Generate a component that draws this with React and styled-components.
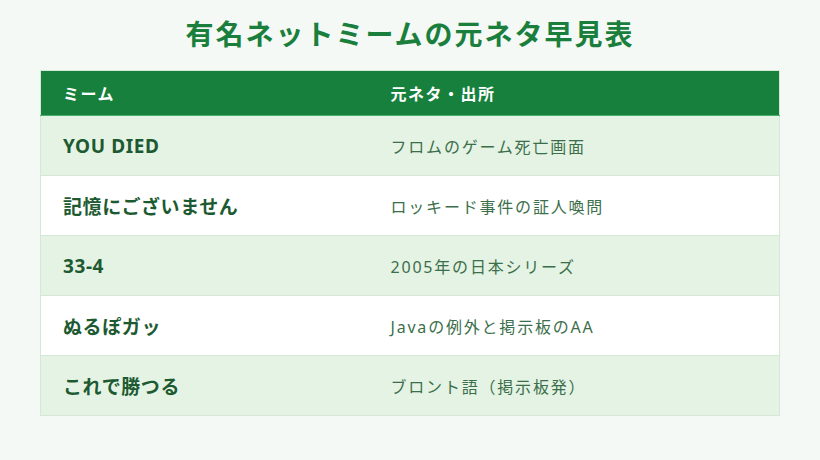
import React from 'react'
import styled, { createGlobalStyle } from 'styled-components'

const GlobalStyle = createGlobalStyle`
    html, body {
        margin: 0;
        padding: 0;
        background: #f4f9f5;
    }
    body {
        font-family: "Noto Sans", "Noto Sans CJK JP", sans-serif;
    }
`

const memes = [
    { name: 'YOU DIED', origin: 'フロムのゲーム死亡画面' },
    { name: '記憶にございません', origin: 'ロッキード事件の証人喚問' },
    { name: '33-4', origin: '2005年の日本シリーズ' },
    { name: 'ぬるぽガッ', origin: 'Javaの例外と掲示板のAA' },
    { name: 'これで勝つる', origin: 'ブロント語（掲示板発）' },
]

const App = () => {
    return <Page>
        <GlobalStyle />
        <Title>有名ネットミームの元ネタ早見表</Title>
        <Table>
            <thead>
                <tr>
                    <HeadCell>ミーム</HeadCell>
                    <HeadCell>元ネタ・出所</HeadCell>
                </tr>
            </thead>
            <tbody>
                {memes.map((m, i) => (
                    <Row key={m.name} $striped={i % 2 === 0}>
                        <NameCell>{m.name}</NameCell>
                        <OriginCell>{m.origin}</OriginCell>
                    </Row>
                ))}
            </tbody>
        </Table>
    </Page>
}

const Page = styled.div`
    width: 820px;
    height: 460px;
    box-sizing: border-box;
    padding: 13px 40px 0;
    display: flex;
    flex-direction: column;
    align-items: center;
`

const Title = styled.h1`
    margin: 0 0 15px;
    font-size: 28px;
    line-height: 42px;
    font-weight: 700;
    letter-spacing: 2px;
    color: #1a7f3c;
`

const Table = styled.table`
    width: 740px;
    border-collapse: collapse;
    table-layout: fixed;
    border: 1px solid #d5e8d6;
`

const HeadCell = styled.th`
    background: #16803c;
    color: #fff;
    text-align: left;
    font-size: 16px;
    font-weight: 700;
    letter-spacing: 1.5px;
    height: 45px;
    padding: 0 22px;
    box-sizing: border-box;
    border-bottom: 1px solid #4caf6a;

    &:first-child {
        width: 328px;
    }
`

const Row = styled.tr`
    background: ${p => p.$striped ? '#e5f3e4' : '#fff'};
    border-bottom: 1px solid #d5e8d6;
`

const NameCell = styled.td`
    height: 59px;
    padding: 0 22px;
    font-size: 19px;
    font-weight: 700;
    letter-spacing: 0.6px;
    color: #1d5a31;
`

const OriginCell = styled.td`
    padding: 0 22px;
    font-size: 16px;
    letter-spacing: 1.8px;
    color: #3b6f4b;
`

export default App
